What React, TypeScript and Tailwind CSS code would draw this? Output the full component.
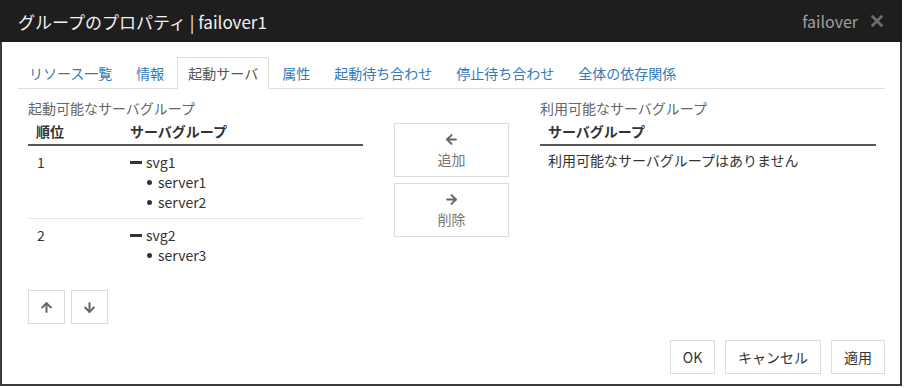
import { ArrowLeft, ArrowRight, ArrowUp, ArrowDown, X } from 'lucide-react';

const FONT = { fontFamily: '"Noto Sans CJK JP", "Noto Sans", sans-serif' };

const TABS = ['リソース一覧', '情報', '起動サーバ', '属性', '起動待ち合わせ', '停止待ち合わせ', '全体の依存関係'];
const ACTIVE = '起動サーバ';

const GROUPS = [
  { order: 1, name: 'svg1', servers: ['server1', 'server2'] },
  { order: 2, name: 'svg2', servers: ['server3'] },
];

function Btn({ className, children }: { className?: string; children: React.ReactNode }) {
  return (
    <button
      className={[
        'border border-[#dcdcdc] bg-white flex items-center justify-center text-[14px] text-[#333]',
        className ?? '',
      ].join(' ')}
    >
      {children}
    </button>
  );
}

export default function App() {
  return (
    <div className="w-[904px] h-[388px] bg-white" style={FONT}>
      <div className="h-[386px] w-[902px] border-x-2 border-b-2 border-[#3a3a3a] flex flex-col">
        {/* Title bar */}
        <div className="h-[42px] bg-[#1e1e1e] flex items-center justify-between pl-[18px] pr-[16px] -mx-[2px]">
          <span className="text-[17px] text-[#f2f2f2] leading-none">グループのプロパティ&nbsp;| failover1</span>
          <div className="flex items-center gap-[10px]">
            <span className="text-[16px] text-[#a0a0a0] leading-none">failover</span>
            <X size={18} strokeWidth={3.5} className="text-[#6e6e6e]" />
          </div>
        </div>

        {/* Tabs */}
        <div className="mt-[15px] ml-[16px] mr-[15px] flex border-b border-[#dddddd] h-[32px]">
          {TABS.map((t) => {
            const isActive = t === ACTIVE;
            return (
              <div
                key={t}
                className={[
                  'px-[10px] mr-[2px] h-[32px] flex items-center text-[14px] leading-none',
                  isActive
                    ? 'border border-[#dddddd] border-b-white bg-white text-[#555] -mb-px'
                    : 'text-[#337ab7] border border-transparent',
                ].join(' ')}
              >
                {t}
              </div>
            );
          })}
        </div>

        {/* Content */}
        <div className="flex pl-[26px] pt-[9px] gap-[31px]">
          {/* Left list */}
          <div className="w-[335px] shrink-0">
            <div className="text-[14px] text-[#666] leading-[20px]">起動可能なサーバグループ</div>
            <div className="flex h-[28px] items-center border-b-2 border-[#555] font-bold text-[14px] text-[#333]">
              <div className="w-[102px] pl-[8px]">順位</div>
              <div>サーバグループ</div>
            </div>
            {GROUPS.map((g, i) => (
              <div
                key={g.order}
                className={[
                  'flex pt-[6px] pb-[6px] text-[14px] text-[#333]',
                  i === 0 ? 'border-b border-[#e8e8e8]' : '',
                ].join(' ')}
              >
                <div className="w-[102px] pl-[9px] leading-[20px]">{g.order}</div>
                <div>
                  <div className="flex items-center leading-[20px]">
                    <span className="inline-block w-[12px] h-[3px] bg-[#333] mr-[4px]" />
                    {g.name}
                  </div>
                  {g.servers.map((s) => (
                    <div key={s} className="flex items-center leading-[20px] pl-[17px]">
                      <span className="inline-block w-[5px] h-[5px] rounded-full bg-[#333] mr-[6px]" />
                      {s}
                    </div>
                  ))}
                </div>
              </div>
            ))}
            <div className="flex gap-[6px] mt-[19px]">
              <Btn className="w-[37px] h-[34px]">
                <ArrowUp size={15} strokeWidth={3.2} className="text-[#666]" />
              </Btn>
              <Btn className="w-[37px] h-[34px]">
                <ArrowDown size={15} strokeWidth={3.2} className="text-[#666]" />
              </Btn>
            </div>
          </div>

          {/* Middle buttons */}
          <div className="w-[115px] shrink-0 pt-[25px] flex flex-col gap-[6px]">
            <Btn className="h-[54px] flex-col text-[#777]">
              <ArrowLeft size={15} strokeWidth={3.2} className="text-[#666] mb-[2px]" />
              <span className="leading-[20px]">追加</span>
            </Btn>
            <Btn className="h-[54px] flex-col text-[#777]">
              <ArrowRight size={15} strokeWidth={3.2} className="text-[#666] mb-[2px]" />
              <span className="leading-[20px]">削除</span>
            </Btn>
          </div>

          {/* Right list */}
          <div className="w-[336px] shrink-0">
            <div className="text-[14px] text-[#666] leading-[20px]">利用可能なサーバグループ</div>
            <div className="flex h-[28px] items-center border-b-2 border-[#555] font-bold text-[14px] text-[#333] pl-[8px]">
              サーバグループ
            </div>
            <div className="pl-[8px] pt-[4px] text-[14px] text-[#333] leading-[20px]">
              利用可能なサーバグループはありません
            </div>
          </div>
        </div>

        {/* Footer */}
        <div className="mt-auto mb-[10px] flex justify-end gap-[10px] pr-[15px]">
          <Btn className="w-[45px] h-[34px]">OK</Btn>
          <Btn className="w-[96px] h-[34px]">キャンセル</Btn>
          <Btn className="w-[54px] h-[34px]">適用</Btn>
        </div>
      </div>
    </div>
  );
}
